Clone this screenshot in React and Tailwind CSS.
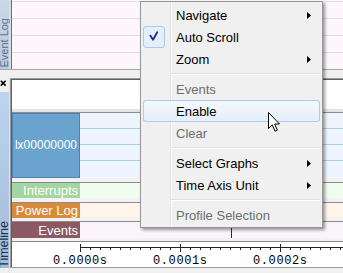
import React from "react";

function SubArrow() {
  return (
    <svg width="4" height="7" viewBox="0 0 4 7" className="ml-auto mr-[9px] shrink-0">
      <path d="M0 0 L4 3.5 L0 7 Z" fill="#000" />
    </svg>
  );
}

function Item({ label, disabled, arrow, checked, active }) {
  return (
    <div
      className={
        active
          ? "relative mx-[2px] flex h-[22px] items-center rounded-[3px] bg-gradient-to-b from-[#f5f9fd] to-[#e4edf8] shadow-[inset_0_0_0_1px_#aacdf0]"
          : "relative mx-[2px] flex h-[22px] items-center rounded-[3px]"
      }
    >
      <div className="h-[22px] w-[22px] shrink-0">
        {checked && (
          <div className="flex h-[22px] w-[22px] items-center justify-center rounded-[3px] border border-[#a9c9ee] bg-[#e5eefb]">
            <svg width="20" height="20" viewBox="0 0 20 20">
              <path d="M6.3 8.6 L9 12.8 L13.2 5.2" fill="none" stroke="#1d2b8e" strokeWidth="1.8" strokeLinecap="round" strokeLinejoin="round" />
            </svg>
          </div>
        )}
      </div>
      <span
        className={
          disabled
            ? "ml-[11px] text-[13px] leading-[15px] text-[#6d6d6d]"
            : "ml-[11px] text-[13px] leading-[15px] text-black"
        }
      >
        {label}
      </span>
      {arrow && <SubArrow />}
    </div>
  );
}

function Sep() {
  return (
    <div className="relative flex h-[8px] flex-col justify-center">
      <div className="ml-[29px] mr-[2px] h-[1px] bg-[#e0e0e0]" />
      <div className="ml-[29px] mr-[2px] h-[1px] bg-white" />
    </div>
  );
}

function Row({ label, h, labelBg, labelBorder, rightBg, children }) {
  return (
    <div className={h + " flex"}>
      <div
        className={
          "flex w-[68px] shrink-0 items-center justify-end whitespace-nowrap pr-[2px] leading-[15px] text-white " +
          labelBg +
          " " +
          labelBorder
        }
      >
        {label}
      </div>
      <div className={"relative flex-1 " + rightBg}>{children}</div>
    </div>
  );
}

function RowSep({ h }) {
  return <div className={h + " border-b border-[#8a8a8a] bg-[#f2f2f2]"} />;
}

export default function App() {
  const minor = [];
  for (let x = 78; x < 331; x += 10) minor.push(x);
  return (
    <div className="relative h-[273px] w-[343px] overflow-hidden bg-[#f0f0f0] font-['Liberation_Sans',Arial,sans-serif]">
      {/* Event Log panel */}
      <div className="flex h-[70px] border-b border-[#a6a6a6]">
        <div className="flex w-[9px] shrink-0 flex-col justify-end bg-gradient-to-b from-[#c9d8e8] to-[#b9cadf] pb-[1px]">
          <span className="shrink-0 whitespace-nowrap text-[11px] leading-[9px] text-[#5d7190] [writing-mode:vertical-rl] rotate-180">
            Event Log
          </span>
        </div>
        <div className="w-[2px] bg-[#dcdcdc]" />
        <div className="flex-1 border-l border-[#6e6e6e] bg-[#fdf6fd] pt-[1px]">
          <div className="h-[17px] border-t border-[#e7dde7]" />
          <div className="h-[17px] border-t border-[#e7dde7]" />
          <div className="h-[17px] border-t border-[#e7dde7]" />
          <div className="h-[17px] border-t border-[#e7dde7]" />
        </div>
      </div>
      {/* splitter */}
      <div className="h-[8px] bg-[#f0f0f0]" />
      {/* Timeline panel */}
      <div className="flex h-[195px]">
        <div className="flex w-[9px] shrink-0 flex-col">
          <div className="h-[14px] pt-[2px]">
            <svg width="7" height="7" viewBox="0 0 7 7">
              <path d="M0.8 0.8 L5.6 5.6 M5.6 0.8 L0.8 5.6" stroke="#000" strokeWidth="1.6" />
            </svg>
          </div>
          <div className="flex h-[176px] flex-col justify-end bg-gradient-to-b from-[#bdd4ee] to-[#a3bbd8]">
            <span className="shrink-0 whitespace-nowrap text-[12.5px] leading-[9px] text-[#22304e] [writing-mode:vertical-rl] rotate-180">
              Timeline
            </span>
          </div>
        </div>
        <div className="w-[1px] bg-[#e2e2e2]" />
        <div className="flex-1">
          <div className="h-[190px] border-b border-l border-t border-[#9a9a9a]">
            <div className="flex h-full flex-col border-l border-t border-[#5f5f5f]">
              <div className="h-[29px] bg-white" />
              <div className="h-[3px] bg-[#e4e4e4]" />
              <div className="h-[1px] bg-[#8c8c8c]" />
              <Row
                label="lx00000000"
                h="h-[65px]"
                labelBg="bg-[#6aa3cd] text-[12px]"
                labelBorder="border border-[#4c83b0]"
                rightBg="bg-[#eef5fe]"
              >
                <div className="h-[16px] border-b border-[#abd3df]" />
                <div className="h-[16px] border-b border-[#abd3df]" />
                <div className="h-[16px] border-b border-[#abd3df]" />
              </Row>
              <RowSep h="h-[5px]" />
              <Row label="Interrupts" h="h-[15px]" labelBg="bg-[#a3d6a0] text-[13px]" labelBorder="" rightBg="bg-[#effcef]" />
              <RowSep h="h-[5px]" />
              <Row label="Power Log" h="h-[15px]" labelBg="bg-[#d98a3b] text-[13px]" labelBorder="" rightBg="bg-[#fff5ea]" />
              <RowSep h="h-[4px]" />
              <Row label="Events" h="h-[16px]" labelBg="bg-[#8c5a64] text-[13px]" labelBorder="" rightBg="bg-[#fcf4fc]" />
              <RowSep h="h-[4px]" />
              <div className="h-[25px] bg-white">
                <svg width="331" height="25" viewBox="0 0 331 25" className="block">
                  <line x1="68" y1="5.5" x2="331" y2="5.5" stroke="#222" strokeWidth="1" />
                  {minor.map((x) => (
                    <line key={x} x1={x + 0.5} y1="5" x2={x + 0.5} y2="8" stroke="#222" strokeWidth="1" />
                  ))}
                  {[68, 168, 268].map((x) => (
                    <line key={"M" + x} x1={x + 0.5} y1="2" x2={x + 0.5} y2="10" stroke="#222" strokeWidth="1" />
                  ))}
                  <text x="41" y="21.5" fontFamily="'Liberation Mono', monospace" fontSize="12" letterSpacing="0.6" fill="#000">0.0000s</text>
                  <text x="141" y="21.5" fontFamily="'Liberation Mono', monospace" fontSize="12" letterSpacing="0.6" fill="#000">0.0001s</text>
                  <text x="241" y="21.5" fontFamily="'Liberation Mono', monospace" fontSize="12" letterSpacing="0.6" fill="#000">0.0002s</text>
                </svg>
              </div>
            </div>
          </div>
        </div>
      </div>

      {/* cursor line in the timeline */}
      <div className="absolute left-[231px] top-[113px] h-[125px] w-[1px] bg-[#1f2a7c]" />

      {/* context menu */}
      <div className="absolute left-[140px] top-[1px] h-[227px] w-[183px] border border-[#979797] bg-[#f0f0f0] pb-[1px] pt-[2px] shadow-[2px_2px_3px_rgba(0,0,0,0.4)]">
        <div className="absolute bottom-0 left-[29px] top-0 w-[1px] bg-[#e2e3e3]" />
        <div className="absolute bottom-0 left-[30px] top-0 w-[1px] bg-white" />
        <Item label="Navigate" arrow />
        <Item label="Auto Scroll" checked />
        <Item label="Zoom" arrow />
        <Sep />
        <Item label="Events" disabled />
        <Item label="Enable" active />
        <Item label="Clear" disabled />
        <Sep />
        <Item label="Select Graphs" arrow />
        <Item label="Time Axis Unit" arrow />
        <Sep />
        <Item label="Profile Selection" disabled />
      </div>

      {/* mouse pointer */}
      <svg className="absolute left-[268px] top-[112px]" width="13" height="21" viewBox="0 0 13 21">
        <path d="M0.5 0.5 L0.5 16.5 L4.3 12.8 L7 19.2 L9.3 18.2 L6.7 12 L11.5 12 Z" fill="#fff" stroke="#000" strokeWidth="1" strokeLinejoin="miter" />
      </svg>
    </div>
  );
}
